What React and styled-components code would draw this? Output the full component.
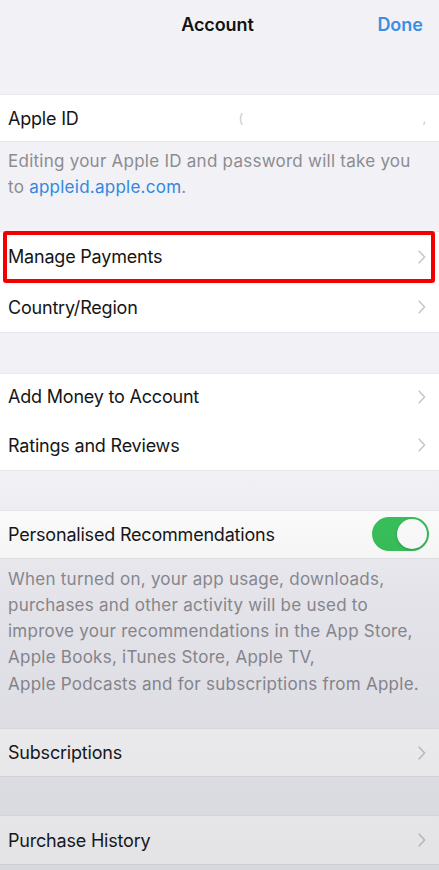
import React, { useState } from 'react';
import styled, { createGlobalStyle } from 'styled-components';

/* ──────────────  Global  ────────────── */

const GlobalStyle = createGlobalStyle`
  html, body {
    margin: 0;
    padding: 0;
    background: #f1f1f6;
  }
  body {
    font-family: Inter, "Noto Sans", sans-serif;
    -webkit-font-smoothing: antialiased;
  }
`;

/* ──────────────  Styled components  ────────────── */

const Screen = styled.div`
  position: relative;
  width: 439px;
  height: 870px;
  overflow: hidden;
  background: #f1f1f6;
  display: flex;
  flex-direction: column;
`;

const Shade = styled.div`
  position: absolute;
  inset: 0;
  pointer-events: none;
  background: linear-gradient(
    to bottom,
    rgba(0, 0, 0, 0) 0px,
    rgba(0, 0, 0, 0) 470px,
    rgba(40, 40, 60, 0.07) 600px,
    rgba(40, 40, 60, 0.13) 870px
  );
`;

const NavBar = styled.header`
  height: 48px;
  display: grid;
  grid-template-columns: 1fr auto 1fr;
  align-items: center;
  padding: 0 16px 0 12px;
`;

const Title = styled.h1`
  grid-column: 2;
  margin: 0;
  font-size: 18px;
  font-weight: 600;
  color: #111;
  letter-spacing: -0.1px;
`;

const DoneButton = styled.button`
  grid-column: 3;
  justify-self: end;
  border: none;
  background: none;
  padding: 0;
  font-family: inherit;
  font-size: 18px;
  font-weight: 600;
  color: #3a8ee4;
`;

const Gap = styled.div`
  height: ${(p) => p.$h}px;
  flex-shrink: 0;
`;

const Group = styled.section`
  background: #ffffff;
  display: flex;
  flex-direction: column;
  box-shadow: 0 -1px 0 #e9e9ee, 0 1px 0 #e6e6eb;
`;

const Row = styled.div`
  position: relative;
  height: ${(p) => p.$h || 48}px;
  display: flex;
  align-items: center;
  justify-content: space-between;
  padding: 0 13px 0 8px;
  font-size: 18px;
  color: #161616;
  letter-spacing: -0.2px;

  & + & {
    border-top: 1px solid ${(p) => (p.$line ? '#dcdce0' : 'transparent')};
  }

  ${(p) =>
    p.$marked &&
    `
    &::after {
      content: '';
      position: absolute;
      top: -1px;
      left: 3px;
      right: 4px;
      bottom: -1px;
      border: 4px solid #f20000;
      border-radius: 3px;
      pointer-events: none;
    }
  `}
`;

const Value = styled.span`
  flex: 1;
  display: flex;
  justify-content: space-between;
  padding: 0 0 0 160px;
  color: #c9c9cc;
  font-size: 13px;
`;

const Chevron = styled.svg`
  width: 8px;
  height: 14px;
  flex-shrink: 0;
`;

const Footer = styled.p`
  margin: 0;
  padding: ${(p) => p.$pad || '5px 0 0 8px'};
  font-size: 17px;
  line-height: 26.3px;
  color: #8c8c91;
  letter-spacing: 0.25px;
  white-space: nowrap;
`;

const Link = styled.a`
  color: #3088e0;
  text-decoration: none;
`;

const Switch = styled.button`
  width: 57px;
  height: 34px;
  border-radius: 17px;
  border: none;
  padding: 2px;
  margin-right: -3px;
  background: ${(p) => (p.$on ? '#38c25a' : '#e5e5ea')};
  display: flex;
  justify-content: ${(p) => (p.$on ? 'flex-end' : 'flex-start')};
  cursor: pointer;
`;

const Knob = styled.span`
  width: 30px;
  height: 30px;
  border-radius: 50%;
  background: #fff;
  box-shadow: 0 1px 3px rgba(0, 0, 0, 0.2);
`;

/* ──────────────  Parts  ────────────── */

const Arrow = () => (
  <Chevron viewBox="0 0 8 14" fill="none">
    <path
      d="M1.2 1.2 L6.6 7 L1.2 12.8"
      stroke="#c7c7cc"
      strokeWidth="1.6"
      strokeLinecap="round"
      strokeLinejoin="round"
    />
  </Chevron>
);

const NavRow = ({ label, h, line, marked }) => (
  <Row $h={h} $line={line} $marked={marked}>
    <span>{label}</span>
    <Arrow />
  </Row>
);

/* ──────────────  Component  ────────────── */

const App = () => {
  const [personalised, setPersonalised] = useState(true);

  return (
    <Screen>
      <GlobalStyle />

      <NavBar>
        <Title>Account</Title>
        <DoneButton>Done</DoneButton>
      </NavBar>

      <Gap $h={47} />
      <Group>
        <Row $h={46}>
          <span>Apple ID</span>
          <Value>
            <span>(</span>
            <span>,</span>
          </Value>
        </Row>
      </Group>
      <Footer $pad="7px 0 0 8px">
        Editing your Apple ID and password will take you
        <br />
        to <Link href="#">appleid.apple.com</Link>.
      </Footer>

      <Gap $h={31} />
      <Group>
        <NavRow label="Manage Payments" h={50} marked />
        <NavRow label="Country/Region" h={49} />
      </Group>

      <Gap $h={42} />
      <Group>
        <NavRow label="Add Money to Account" h={46} />
        <NavRow label="Ratings and Reviews" h={49} line />
      </Group>

      <Gap $h={41} />
      <Group>
        <Row $h={47}>
          <span>Personalised Recommendations</span>
          <Switch
            $on={personalised}
            onClick={() => setPersonalised(!personalised)}
            aria-label="Personalised Recommendations"
          >
            <Knob />
          </Switch>
        </Row>
      </Group>
      <Footer $pad="8px 0 0 8px">
        When turned on, your app usage, downloads,
        <br />
        purchases and other activity will be used to
        <br />
        improve your recommendations in the App Store,
        <br />
        Apple Books, iTunes Store, Apple TV,
        <br />
        Apple Podcasts and for subscriptions from Apple.
      </Footer>

      <Gap $h={32} />
      <Group>
        <NavRow label="Subscriptions" h={47} />
      </Group>

      <Gap $h={40} />
      <Group>
        <NavRow label="Purchase History" h={48} />
      </Group>

      <Shade />
    </Screen>
  );
};

export default App;
